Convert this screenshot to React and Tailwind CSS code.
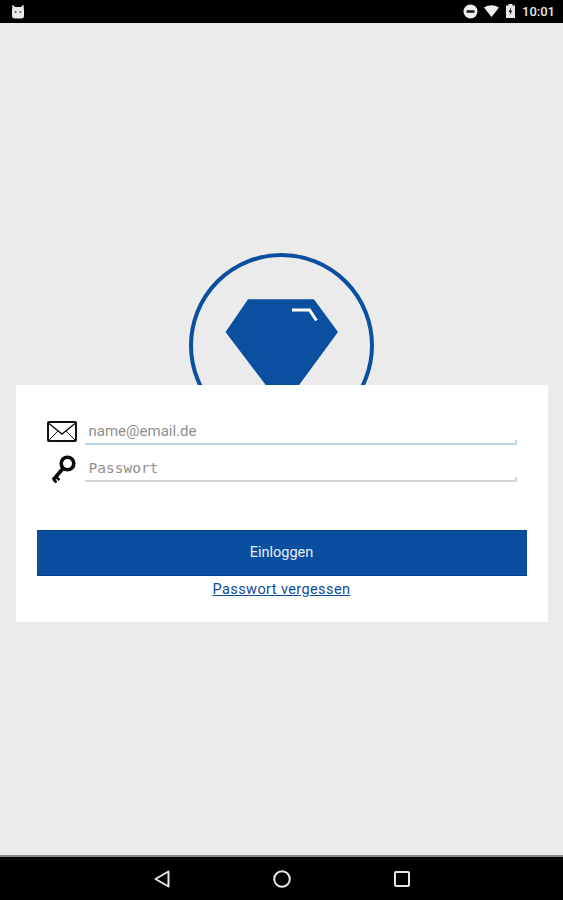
import { useState } from "react";

function StatusBar() {
  return (
    <div className="flex h-[23px] shrink-0 items-center justify-between bg-black pl-[11px] pr-[8px] pb-[1px]">
      <svg width="14" height="15" viewBox="0 0 14 15" fill="#e8e8e8">
        <path d="M1.5 0.5 L4 3 H10 L12.5 0.5 L13 7 V12 Q13 14.5 10 14.5 H4 Q1 14.5 1 12 V7 Z" />
        <circle cx="4.6" cy="8" r="1" fill="#555" />
        <circle cx="9.4" cy="8" r="1" fill="#555" />
      </svg>
      <div className="flex items-center">
        <svg width="15" height="15" viewBox="0 0 15 15" className="mr-[6px]">
          <circle cx="7.5" cy="7.5" r="7" fill="#f0f0f0" />
          <rect x="3.5" y="6.2" width="8" height="2.6" fill="#222" />
        </svg>
        <svg width="15" height="12" viewBox="0 0 15 12" className="mr-[7px]">
          <path d="M0 2.5 Q7.5 -2 15 2.5 L7.5 12 Z" fill="#f0f0f0" />
        </svg>
        <svg width="9" height="14" viewBox="0 0 9 14" className="mr-[7px]">
          <path d="M2.5 0 H6.5 V1.5 H9 V14 H0 V1.5 H2.5 Z" fill="#e8e8e8" />
          <path d="M5.2 3 L2.6 8 H4.2 L3.6 11.5 L6.4 6.4 H4.8 Z" fill="#222" />
        </svg>
        <span className="font-['Roboto',sans-serif] text-[13px] font-medium leading-none text-[#e8e8e8]">10:01</span>
      </div>
    </div>
  );
}

function NavBar() {
  return (
    <div className="flex h-[45px] shrink-0 items-center justify-between border-t-2 border-[#8a8a8a] bg-black pl-[154px] pr-[153px]">
      <svg width="16" height="18" viewBox="0 0 16 18" fill="none" stroke="#e6e6e6" strokeWidth="2" strokeLinejoin="round">
        <path d="M14.5 1.5 V16.5 L1.5 9 Z" />
      </svg>
      <svg width="18" height="18" viewBox="0 0 18 18" fill="none" stroke="#e6e6e6" strokeWidth="2">
        <circle cx="9" cy="9" r="7.8" />
      </svg>
      <svg width="16" height="16" viewBox="0 0 16 16" fill="none" stroke="#e6e6e6" strokeWidth="2">
        <rect x="1" y="1" width="14" height="14" rx="1" />
      </svg>
    </div>
  );
}

// circle is cut off where the card starts, so the viewBox just stops there
function Logo() {
  return (
    <svg width="185" height="132" viewBox="189 253 185 132" className="block shrink-0">
      <circle cx="281.5" cy="345.5" r="90.5" fill="none" stroke="#0a4fa0" strokeWidth="4" />
      <path d="M248.5 300 H313.5 L337 332 L293 392 H272 L226.5 332 Z" fill="#0a4fa0" stroke="#0a4fa0" strokeWidth="1.5" strokeLinejoin="round" />
      <path d="M292 310 H309.5 L316.5 320.5" fill="none" stroke="#ffffff" strokeWidth="3" />
    </svg>
  );
}

function MailIcon() {
  return (
    <svg width="30" height="21" viewBox="0 0 30 21" fill="none" stroke="#111" className="mb-[2px] shrink-0">
      <rect x="1" y="1" width="28" height="19" rx="1" strokeWidth="2" />
      <path d="M2 2.5 L15 13 L28 2.5" strokeWidth="1.4" />
      <path d="M2 19 L11 10 M28 19 L19 10" strokeWidth="1" />
    </svg>
  );
}

function KeyIcon() {
  return (
    <svg width="30" height="30" viewBox="0 0 30 30" fill="none" stroke="#0a0a0a" className="-mb-[2px] shrink-0">
      <circle cx="20.5" cy="10.5" r="6.3" strokeWidth="3.6" />
      <path d="M16 15.5 L6 27" strokeWidth="3.6" />
      <path d="M9 24 L12.5 27 M6.5 26.5 L9.5 29.5" strokeWidth="2.6" />
    </svg>
  );
}

function Field({ icon, type, placeholder, value, onChange, inputClass, lineClass }) {
  return (
    <div className="flex items-end">
      <div className="flex w-[69px] justify-end pr-[7px] pb-[1px]">
        <div className="flex w-[32px] justify-center">{icon}</div>
      </div>
      <div className={"relative flex h-[28px] w-[432px] items-end border-b-2 " + lineClass}>
        <input
          type={type}
          value={value}
          onChange={onChange}
          placeholder={placeholder}
          className={"h-full w-full bg-transparent pt-[2px] pl-[4px] outline-none " + inputClass}
        />
        <span className={"absolute right-0 -bottom-[2px] h-[5px] w-0 border-r-2 " + lineClass} />
      </div>
    </div>
  );
}

export default function App() {
  const [email, setEmail] = useState("");
  const [password, setPassword] = useState("");

  return (
    <div className="flex h-[900px] w-[563px] flex-col overflow-hidden bg-[#ebebeb] font-['Roboto',sans-serif]">
      <StatusBar />
      <main className="flex flex-1 flex-col items-center pt-[230px]">
        <Logo />
        <div className="h-[237px] w-[532px] bg-white pt-[32px]">
          <Field
            icon={<MailIcon />}
            type="email"
            placeholder="name@email.de"
            value={email}
            onChange={(e) => setEmail(e.target.value)}
            inputClass="font-['Roboto',sans-serif] text-[15px] placeholder:text-[#8f8f8f]"
            lineClass="border-[#b9d5e8]"
          />
          <div className="mt-[8px]">
            <Field
              icon={<KeyIcon />}
              type="password"
              placeholder="Passwort"
              value={password}
              onChange={(e) => setPassword(e.target.value)}
              inputClass="font-['DejaVu_Sans_Mono',monospace] text-[14.5px] placeholder:text-[#8f8f8f]"
              lineClass="border-[#d2d2d2]"
            />
          </div>
          <div className="mt-[48px] flex flex-col items-center">
            <button className="h-[46px] w-[490px] cursor-pointer border-y border-[#073f88] bg-[#0a4f9f] text-[14.5px] text-[#e9edf6]">
              Einloggen
            </button>
            <a href="#" className="mt-[3px] font-['Roboto',sans-serif] text-[14.5px] tracking-[0.4px] text-[#0f4c98] underline">
              Passwort vergessen
            </a>
          </div>
        </div>
      </main>
      <NavBar />
    </div>
  );
}
